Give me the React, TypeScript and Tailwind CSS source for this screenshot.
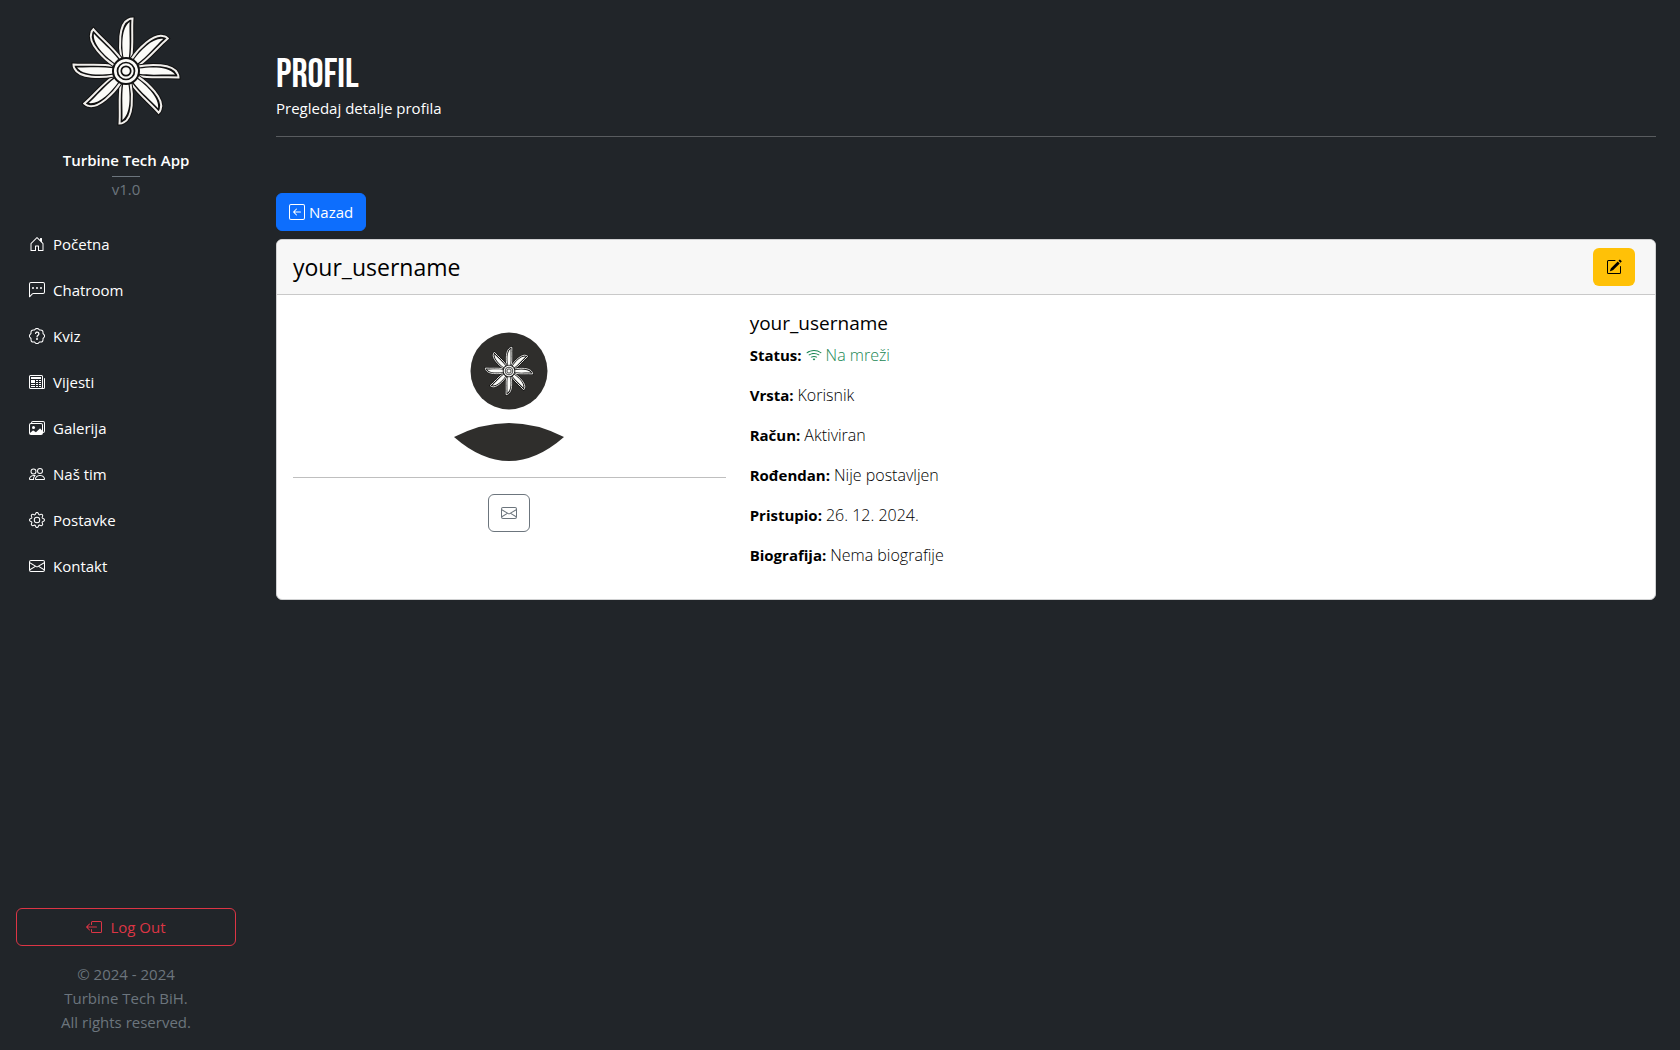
import React from "react";
import {
  BsHouseDoor, BsChatLeftDots, BsPatchQuestion, BsNewspaper, BsImages, BsPeople, BsGear, BsEnvelope,
  BsArrowLeftSquare, BsPencilSquare, BsWifi, BsBoxArrowLeft,
} from "react-icons/bs";

const BLADE = "M-4.5 -12 C-7 -24 -7.5 -47 2.5 -51.5 Q4 -52.5 6.5 -52.5 C5.5 -40 7.5 -26 5 -12 Z";
const CORE = "M-2.4 -13 C-4.5 -26 -4.5 -43 3.6 -49 C3 -38 4.6 -26 2.8 -13 Z";
const ANGLES = [0, 45, 90, 135, 180, 225, 270, 315];

function Blades() {
  return (
    <>
      {ANGLES.map((a) => (
        <g key={a} transform={`rotate(${a})`}>
          <path d={BLADE} fill="#111" stroke="#111" strokeWidth="4" />
          <path d={BLADE} fill="#111" stroke="#f1efec" strokeWidth="2" />
          <path d={CORE} fill="#fbfbf8" />
        </g>
      ))}
      <circle r="14" fill="#111" />
      <circle r="12" fill="#fbfbf8" />
      <circle r="8.5" fill="#fbfbf8" stroke="#111" strokeWidth="1.7" />
      <circle r="4.7" fill="#fbfbf8" stroke="#111" strokeWidth="1.7" />
    </>
  );
}

const NAV = [
  { label: "Početna", Icon: BsHouseDoor },
  { label: "Chatroom", Icon: BsChatLeftDots },
  { label: "Kviz", Icon: BsPatchQuestion },
  { label: "Vijesti", Icon: BsNewspaper },
  { label: "Galerija", Icon: BsImages },
  { label: "Naš tim", Icon: BsPeople },
  { label: "Postavke", Icon: BsGear },
  { label: "Kontakt", Icon: BsEnvelope },
];

const DETAILS = [
  ["Vrsta:", "Korisnik"],
  ["Račun:", "Aktiviran"],
  ["Rođendan:", "Nije postavljen"],
  ["Pristupio:", "26. 12. 2024."],
  ["Biografija:", "Nema biografije"],
];

export default function App() {
  return (
    <div className="flex min-h-screen bg-[#212529] font-['Open_Sans','Noto_Sans',sans-serif] text-[15px] leading-6 text-white">
      <aside className="flex w-[252px] shrink-0 flex-col p-4">
        <header className="flex flex-col items-center">
          <svg viewBox="-55 -55 110 110" className="size-[110px]" aria-hidden="true">
            <Blades />
          </svg>
          <strong className="mt-[22px] font-semibold">Turbine Tech App</strong>
          <span className="mt-1 border-t border-[#6c757d] text-[#6c757d]">v1.0</span>
        </header>
        <nav className="mt-[23px]">
          <ul className="flex flex-col gap-[6px]">
            {NAV.map(({ label, Icon }) => (
              <li key={label}>
                <a href="#" className="flex items-center gap-2 px-[13px] py-2">
                  <Icon className="size-4" />
                  {label}
                </a>
              </li>
            ))}
          </ul>
        </nav>
        <footer className="mt-auto text-center text-[#6c757d]">
          <button className="mb-4 flex w-full items-center justify-center gap-2 rounded-md border border-[#dc3545] py-[6px] text-[#dc3545]">
            <BsBoxArrowLeft className="size-4" />
            Log Out
          </button>
          <p>© 2024 - 2024<br />Turbine Tech BiH.<br />All rights reserved.</p>
        </footer>
      </aside>

      <main className="min-w-0 flex-1 px-6 pt-14">
        <h1 className="font-['Bebas_Neue',Roboto,sans-serif] text-[40px] leading-[38px] mb-[2px] font-medium">PROFIL</h1>
        <p>Pregledaj detalje profila</p>
        <hr className="mt-4 border-[#595c5f]" />

        <button className="mt-14 flex items-center gap-1 rounded-md border border-[#0d6efd] bg-[#0d6efd] px-3 py-[6px]">
          <BsArrowLeftSquare className="size-4" />
          Nazad
        </button>

        <section className="mt-2 overflow-hidden rounded-md border border-[#d0d1d2] bg-white text-black">
          <header className="flex items-center justify-between border-b border-[#c9c9c9] bg-[#f7f7f7] py-2 pr-5 pl-4">
            <h2 className="text-[23px] leading-8 font-medium">your_username</h2>
            <button aria-label="Uredi profil" className="rounded-md bg-[#ffc107] px-[13px] py-[11px]">
              <BsPencilSquare className="size-4" />
            </button>
          </header>
          <div className="grid grid-cols-[1fr_2fr] px-1 pt-4 pb-8">
            <div className="flex flex-col items-center px-3">
              <svg viewBox="0 0 150 150" className="size-[150px]" aria-hidden="true">
                <circle cx="75" cy="60" r="38.5" fill="#2f2e2c" />
                <path d="M20 126 Q75 98 130 126 Q75 174 20 126Z" fill="#2f2e2c" />
                <g transform="translate(75 60) scale(.45)"><Blades /></g>
              </svg>
              <hr className="my-4 w-full border-[#bfbfbf]" />
              <button aria-label="Pošalji poruku" className="rounded-md border border-[#6c757d] px-3 py-[10px] text-[#6c757d]">
                <BsEnvelope className="size-4" />
              </button>
            </div>
            <div className="px-3">
              <h3 className="mb-2 text-[19px] leading-6 font-medium">your_username</h3>
              <dl className="flex flex-col gap-4">
                <div className="flex gap-1">
                  <dt className="font-bold">Status:</dt>
                  <dd className="flex items-center gap-1 text-base font-light text-[#198754]"><BsWifi className="size-4" />Na mreži</dd>
                </div>
                {DETAILS.map(([k, v]) => (
                  <div key={k} className="flex gap-1">
                    <dt className="font-bold">{k}</dt>
                    <dd className="text-base font-light">{v}</dd>
                  </div>
                ))}
              </dl>
            </div>
          </div>
        </section>
      </main>
    </div>
  );
}
